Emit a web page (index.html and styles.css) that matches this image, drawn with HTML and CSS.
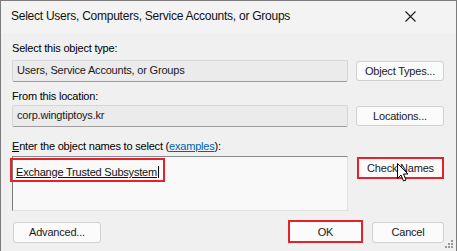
FILE: index.html
```html
<!DOCTYPE html>
<html>
<head>
<meta charset="utf-8">
<link rel="stylesheet" href="styles.css">
</head>
<body>
<div class="window">
  <div class="titlebar">
    <span class="title">Select Users, Computers, Service Accounts, or Groups</span>
    <svg class="close" width="11" height="11" viewBox="0 0 11 11"><path d="M0.5 0.5 L10.5 10.5 M10.5 0.5 L0.5 10.5" stroke="#1a1a1a" stroke-width="1.1" fill="none"/></svg>
  </div>
  <div class="content">
    <div class="label l1">Select this object type:</div>
    <div class="row r1">
      <div class="field">Users, Service Accounts, or Groups</div>
      <div class="btn side">Object Types...</div>
    </div>
    <div class="label l2">From this location:</div>
    <div class="row r2">
      <div class="field">corp.wingtiptoys.kr</div>
      <div class="btn side">Locations...</div>
    </div>
    <div class="label l3"><u>E</u>nter the object names to select (<span class="link">examples</span>):</div>
    <div class="row r3">
      <div class="textarea"><span class="entry">Exchange Trusted Subsystem</span><span class="caret"></span></div>
      <div class="btn side check">Check Names</div>
    </div>
    <div class="row bottom">
      <div class="btn adv">Advanced...</div>
      <div class="spacer"></div>
      <div class="btn ok">OK</div>
      <div class="btn cancel">Cancel</div>
    </div>
  </div>
  <div class="redbox"></div>
  <svg class="cursor" width="14" height="21" viewBox="0 0 14 21"><path d="M1.5 1.5 L1.5 16.5 L5 13 L7.5 19 L10 18 L7.5 12 L12 12 Z" fill="#fff" stroke="#000" stroke-width="1" stroke-linejoin="round"/></svg>
  <svg class="grip" width="8" height="8" viewBox="0 0 8 8"><g fill="#9a9a9a"><rect x="6" y="0" width="2" height="2"/><rect x="3" y="3" width="2" height="2"/><rect x="6" y="3" width="2" height="2"/><rect x="0" y="6" width="2" height="2"/><rect x="3" y="6" width="2" height="2"/><rect x="6" y="6" width="2" height="2"/></g></svg>
</div>
</body>
</html>
```
FILE: styles.css
```css
html, body {
  margin: 0;
  padding: 0;
  background: #f0f0f0;
}
body {
  font-family: "Liberation Sans", Arial, sans-serif;
  font-size: 11px;
  letter-spacing: -0.2px;
  color: #000;
}
.window {
  position: relative;
  width: 457px;
  height: 251px;
  box-sizing: border-box;
  border: 1px solid #7c7c7c;
  border-bottom: none;
  background: #f0f0f0;
  overflow: hidden;
}
.titlebar {
  height: 32px;
  display: flex;
  align-items: flex-start;
  background: #f3f3f3;
}
.title {
  margin-left: 10px;
  margin-top: 8px;
  line-height: 14px;
  font-size: 12px;
  letter-spacing: -0.25px;
  color: #111;
}
.close {
  margin-left: auto;
  margin-right: 40px;
  margin-top: 10px;
}
.content {
  padding: 0 12px 0 11px;
}
.label {
  line-height: 14px;
  height: 14px;
  white-space: nowrap;
}
.l1 { margin-top: 8px; }
.l2 { margin-top: 7px; }
.l3 { margin-top: 12px; }
.link {
  color: #0063b1;
  text-decoration: underline;
}
.row {
  display: flex;
  align-items: center;
  gap: 8px;
}
.r1 { margin-top: 5px; }
.r2 { margin-top: 2px; }
.r3 { margin-top: 3px; align-items: flex-start; }
.field {
  width: 336px;
  height: 22px;
  box-sizing: border-box;
  border: 1px solid #d6d6d6;
  border-bottom-color: #9c9c9c;
  background: #ebebeb;
  padding: 2px 0 0 4px;
  line-height: 14px;
  color: #1a1a1a;
  border-radius: 2px;
}
.btn {
  box-sizing: border-box;
  height: 20px;
  border: 1px solid #d0d0d0;
  border-radius: 3px;
  background: #fbfbfb;
  display: flex;
  align-items: center;
  justify-content: center;
  line-height: 14px;
  color: #1a1a1a;
  white-space: nowrap;
}
.side { width: 88px; }
.check {
  margin-top: 1px;
  margin-left: 1px;
  width: 87px;
  height: 22px;
  border: 2px solid #e3222b;
  border-radius: 0;
  padding-bottom: 1px;
}
.textarea {
  width: 336px;
  height: 55px;
  box-sizing: border-box;
  border: 1px solid #e0e0e0;
  border-left-color: #7a7a7a;
  border-top-color: #8a8a8a;
  background: #f9f9f9;
  padding: 8px 0 0 3px;
  line-height: 14px;
  display: flex;
  align-items: flex-start;
}
.entry {
  text-decoration: underline;
  color: #111;
}
.caret {
  width: 1px;
  height: 12px;
  margin-top: 1px;
  margin-left: 1px;
  background: #000;
}
.bottom {
  margin-top: 10px;
  gap: 9px;
}
.adv {
  width: 88px;
  height: 21px;
  margin-left: 1px;
}
.spacer { flex: 1; }
.ok {
  width: 75px;
  height: 23px;
  border: 2px solid #e3222b;
  border-radius: 0;
  margin-top: -1px;
}
.cancel {
  width: 72px;
  height: 21px;
}
.redbox {
  position: absolute;
  left: 9px;
  top: 157px;
  width: 155px;
  height: 24px;
  box-sizing: border-box;
  border: 2px solid #e3222b;
}
.cursor {
  position: absolute;
  left: 395px;
  top: 161px;
}
.grip {
  position: absolute;
  right: 3px;
  bottom: 3px;
}
```
